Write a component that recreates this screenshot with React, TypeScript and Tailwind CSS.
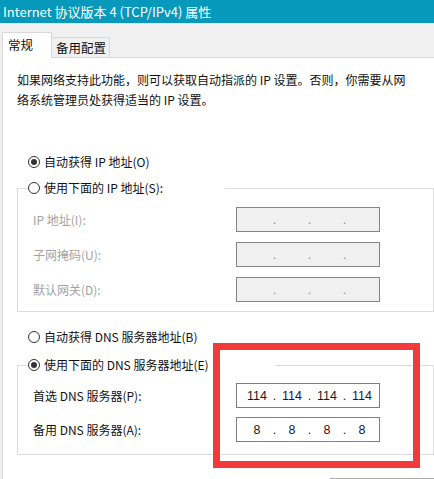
import React from "react";

function Radio({ checked }: { checked: boolean }) {
  return (
    <span className="flex h-[12px] w-[12px] shrink-0 items-center justify-center rounded-full border border-[#333333] bg-white">
      {checked && <span className="h-[6px] w-[6px] rounded-full bg-[#333333]" />}
    </span>
  );
}

function IpBox({ values, disabled }: { values: string[]; disabled?: boolean }) {
  return (
    <div
      className={
        "flex h-[25px] w-[144px] items-center border pl-[5px] font-['Liberation_Sans',sans-serif] text-[12.5px] " +
        (disabled ? "border-[#858585] bg-[#f0f0f0] text-[#8a8a8a]" : "border-[#7f7f7f] bg-white text-[#1a1a1a]")
      }
    >
      {values.map((v, i) => (
        <React.Fragment key={i}>
          <span className="w-[30px] text-center">{v}</span>
          {i < 3 && <span className="w-[5px] text-center">.</span>}
        </React.Fragment>
      ))}
    </div>
  );
}

function Row({ label, disabled, values, className }: { label: string; disabled?: boolean; values: string[]; className?: string }) {
  return (
    <div className={"flex items-center " + (className ?? "")}>
      <span className={"ml-[5px] w-[203px] " + (disabled ? "text-[#a3a3a3]" : "text-[#111111]")}>{label}</span>
      <IpBox values={values} disabled={disabled} />
    </div>
  );
}

export default function App() {
  return (
    <div className="relative h-[479px] w-[434px] overflow-hidden bg-[#f0f0f0] font-['Noto_Sans_CJK_SC',sans-serif] text-[12px] leading-[16px] text-[#111111]">
      {/* title bar */}
      <div className="flex h-[23px] items-center bg-[#0699bb] pl-[3px] text-[13px] text-white">
        Internet 协议版本 4 (TCP/IPv4) 属性
      </div>

      {/* tabs */}
      <div className="flex h-[34px] items-end pl-[2px]">
        <div className="relative z-10 -mb-px flex h-[26px] w-[50px] items-start border-l border-r border-t border-[#d9d9d9] bg-white pl-[5px] pt-[4px] text-[12.5px]">
          常规
        </div>
        <div className="flex h-[20px] w-[58px] items-center border-r border-t border-[#d9d9d9] bg-[#f0f0f0] pl-[4px] text-[12.5px]">
          备用配置
        </div>
      </div>

      {/* panel */}
      <div className="ml-[2px] h-[430px] border-l border-t border-[#d9d9d9] bg-white">
        <p className="whitespace-nowrap pl-[14px] pt-[12px] leading-[20px]">
          如果网络支持此功能，则可以获取自动指派的 IP 设置。否则，你需要从网
          <br />
          络系统管理员处获得适当的 IP 设置。
        </p>

        <div className="ml-[25px] mt-[44px] flex h-[16px] items-center gap-[4px]">
          <Radio checked />
          <span>自动获得 IP 地址(O)</span>
        </div>

        <fieldset className="ml-[14px] mt-[10px] w-[417px] border border-[#dcdcdc] pb-[9px] pl-[10px]">
          <legend className="flex h-[16px] w-[197px] items-center gap-[4px]">
            <Radio checked={false} />
            <span>使用下面的 IP 地址(S):</span>
          </legend>
          <Row className="mt-[11px]" label="IP 地址(I):" disabled values={["", "", "", ""]} />
          <Row className="mt-[10px]" label="子网掩码(U):" disabled values={["", "", "", ""]} />
          <Row className="mt-[10px]" label="默认网关(D):" disabled values={["", "", "", ""]} />
        </fieldset>

        <div className="ml-[25px] mt-[17px] flex h-[16px] items-center gap-[4px]">
          <Radio checked={false} />
          <span>自动获得 DNS 服务器地址(B)</span>
        </div>

        <fieldset className="ml-[14px] mt-[12px] w-[417px] border border-[#dcdcdc] pb-[12px] pl-[10px]">
          <legend className="flex h-[16px] w-[247px] items-center gap-[4px]">
            <Radio checked />
            <span>使用下面的 DNS 服务器地址(E)</span>
          </legend>
          <Row className="mt-[10px]" label="首选 DNS 服务器(P):" values={["114", "114", "114", "114"]} />
          <Row className="mt-[9px]" label="备用 DNS 服务器(A):" values={["8", "8", "8", "8"]} />
        </fieldset>

        <div className="ml-[327px] mt-[23px] h-[10px] w-[104px] border-t border-[#adadad]" />
      </div>

      {/* red annotation box */}
      <div className="absolute left-[213px] top-[343px] h-[125px] w-[207px] border-[7px] border-[#f23a3a]" />
    </div>
  );
}
